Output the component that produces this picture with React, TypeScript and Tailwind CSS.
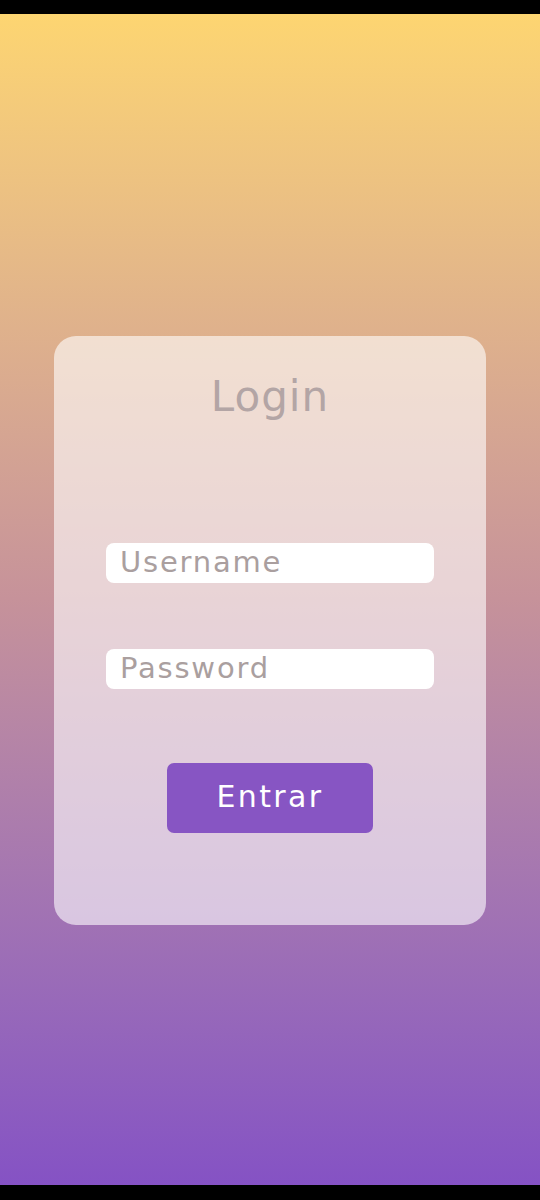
export default function App() {
  return (
    <div className="flex h-screen flex-col bg-black font-['DejaVu_Sans',sans-serif]">
      <div className="h-[14px] shrink-0 bg-black" />

      <div className="flex-1 bg-gradient-to-b from-[#fdd571] via-[#c6929a] to-[#8552c4] pt-[322px]">
        {/* Login card */}
        <div className="mx-[54px] flex h-[589px] flex-col items-center rounded-[22px] bg-white/60 px-[52px]">
          <h1 className="mt-[37px] text-[42px] leading-[48px] tracking-[1px] text-[#b3a5a5]">Login</h1>

          <input
            type="text"
            placeholder="Username"
            className="mt-[122px] h-10 w-full rounded-lg bg-white px-[14px] text-[29px] tracking-[1.8px] text-[#a89d9d] outline-none placeholder:text-[#aa9f9f]"
          />

          <input
            type="password"
            placeholder="Password"
            className="mt-[66px] h-10 w-full rounded-lg bg-white px-[14px] text-[29px] tracking-[1.8px] text-[#a89d9d] outline-none placeholder:text-[#aa9f9f]"
          />

          <button
            type="button"
            className="mt-[74px] h-[70px] w-[206px] rounded-[7px] bg-[#8755c3] pb-[3px] text-[30px] tracking-[2.4px] text-white"
          >
            Entrar
          </button>
        </div>
      </div>

      <div className="h-[15px] shrink-0 bg-black" />
    </div>
  );
}
